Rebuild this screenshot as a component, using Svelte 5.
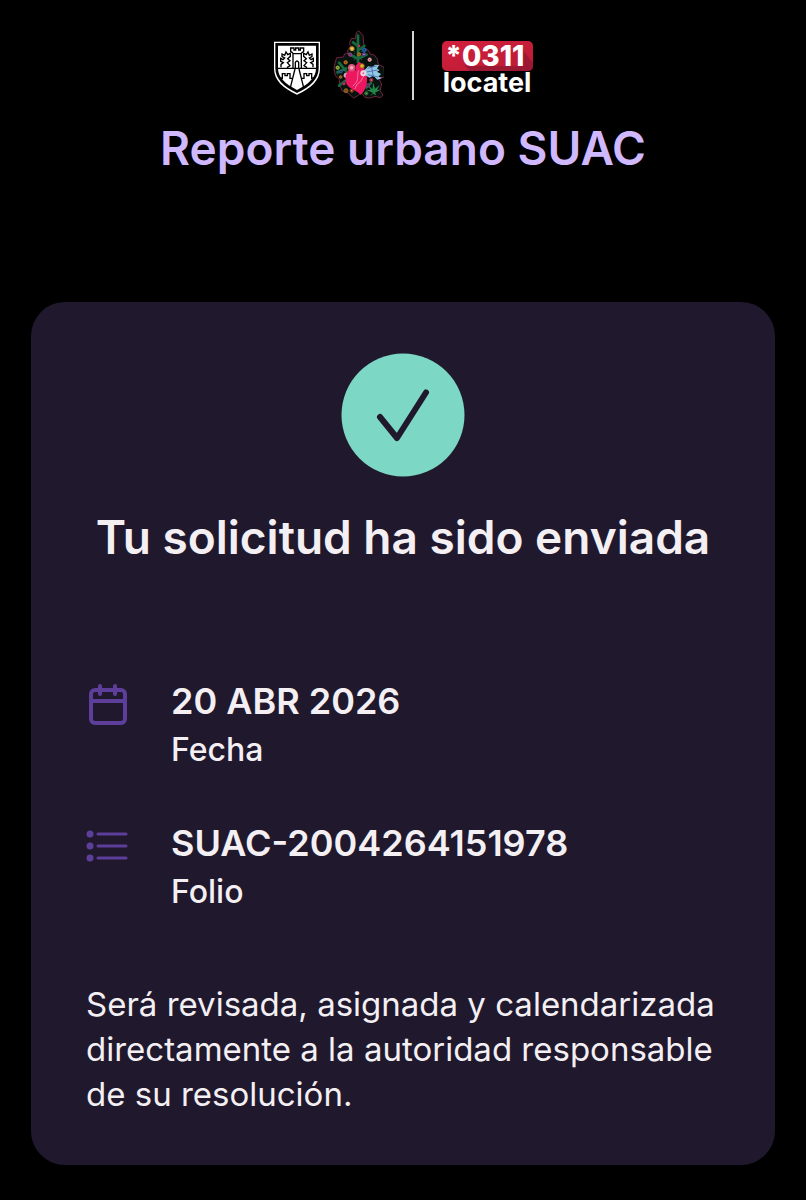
<script>
  const details = [
    { icon: 'calendar', value: '20 ABR 2026', label: 'Fecha' },
    { icon: 'list', value: 'SUAC-2004264151978', label: 'Folio' }
  ];

  // x, y, radius, petal colour, centre colour
  const flowers = [
    [87, 71, 6, '#d8a82c', '#fff2b0'],
    [108, 63, 3, '#a32638', '#e85b6d'],
    [82, 89, 5, '#933b86', '#4a214e'],
    [108, 88, 5, '#a86a24', '#7c4317'],
    [124, 75, 6, '#1e5b9d', '#102f60'],
    [123, 88, 5, '#5a4380', '#c8a1d9'],
    [68, 112, 5, '#b96d1b', '#693111'],
    [44, 128, 5, '#8fae39', '#427624'],
    [54, 140, 4, '#32549c', '#111f46'],
    [53, 156, 4, '#b76a29', '#7c371f'],
    [70, 151, 7, '#cbb0bf', '#77506d'],
    [63, 176, 4, '#8a2450', '#e4678e'],
    [69, 197, 6, '#8c601f', '#4c3916'],
    [86, 197, 5, '#8b3520', '#dca33e'],
    [140, 104, 5, '#f0a0a8', '#c83742'],
    [145, 165, 5, '#8f2a49', '#f07999'],
    [135, 181, 5, '#6d3d79', '#3a1e4b'],
    [130, 205, 5, '#2f6e3d', '#89ae3c']
  ];
</script>

<div class="page">
  <header>
    <div class="brands">
      <svg class="crest" viewBox="27 48 138 162" role="img" aria-label="Ciudad de México">
        <path d="M27 50h138v81c0 34-27 59-69 78-42-19-69-44-69-78Z" fill="#fff" />
        <path d="M31 54h130v76c0 32-25 55-65 74-40-19-65-42-65-74Z" fill="#000" />
        <path d="M39 62h114v68c0 27-20 46-57 65-37-19-57-38-57-65Z" fill="#fff" />
        <g fill="none" stroke="#000" stroke-width="4">
          <path d="M38 130h116M84 130V85l-7-6V69h10v6h5v-6h9v6h5v-6h10v10l-7 6v45M84 86h24M91 130v-18q5-8 10 0v18M90 132l-14 56M102 132l14 56" />
          <path d="M42 158l10 2v-14h8v6h7v-6h8v14h8M109 160h8v-14h8v6h7v-6h8v14l10-2" />
          <path d="M48 127v-9l7-5-8-4v-9l7 4 5-5-8-4v-8l8 4 4-10 5 8 8-4v9l-8 7 7 6-8 6 8 9-9 6" />
          <path d="M144 127v-9l-7-5 8-4v-9l-7 4-5-5 8-4v-8l-8 4-4-10-5 8-8-4v9l8 7-7 6 8 6-8 9 9 6" />
        </g>
      </svg>

      <svg class="heart" viewBox="21 12 162 219" role="img" aria-label="Corazón florido">
        <path d="m107 17-7 6-3 18-12-1-5 13 2 11-8 12 1 9-11 2-2 9-21 2-4 13-4 20 4 21 12 12 1 17 8 17 17 6 17 15 14-8 9-8 12 15 15 1 14-5 16 4 8-7-9-14 5-20-10-18 19-3-2-29-17-9-3-16-9-12-12-2-6-12-13-8-3-36Z" fill="#06120d" stroke="#77213d" stroke-width="3" />
        <g fill="none" stroke="#17663d" stroke-width="8" stroke-linecap="round">
          <path d="M105 112V32M104 63 90 52M107 75l17-12M103 101 78 87M107 101l24-12M70 139 48 113M70 130 43 142M66 168 48 182M130 188l14-14" />
        </g>
        <path d="M105 106V32M94 105V68M115 105V70M50 115l15 23M44 148l23-16" fill="none" stroke="#2b8a52" stroke-width="2" stroke-dasharray="3 3" />
        <path d="m150 203-23-9 16 1-9-16 14 13 3-19 5 18 14-11-8 15 13-2-19 10 4 8-10-5-11 9Z" fill="#24864b" />
        {#each flowers as [x, y, r, petals, centre]}
          <circle cx={x} cy={y} {r} fill={petals} stroke={petals} stroke-width="3" />
          <circle cx={x} cy={y} r="2" fill={centre} />
        {/each}
        <path d="M82 130c-15 12-19 35-10 49 9 14 31 17 40 30 12-8 19-24 20-42 1-15-2-26-7-33l-5-16-12-8-10 13v14Z" fill="#ed1760" />
        <path d="M107 136c-6 16 1 25-9 39l-9 9M123 151l-10 18-10 8-8 15" fill="none" stroke="#f4a1bb" stroke-width="2" />
        <path d="m123 137 12-13 14 2 7-7 12 1-6 11 8 4-8 5 12 7-8 8 12 4-15 5-12-12-12 6-13-8-8-5Z" fill="#90c9e4" />
        <path d="m133 130 28-7M131 141l32-6M135 149l30 7M146 127l5 28" stroke="#5874b9" stroke-width="3" />
        <circle cx="86" cy="128" r="11" fill="#e35a81" />
        <circle cx="86" cy="128" r="7" fill="#f5a7b8" stroke="#c62d60" stroke-width="2" />
        <circle cx="117" cy="123" r="7" fill="#eab52f" stroke="#8e4d1f" stroke-width="3" />
        <circle cx="121" cy="145" r="9" fill="#f2d5df" />
        <circle cx="121" cy="145" r="3" fill="#d46d99" />
      </svg>

      <span class="divider"></span>

      <svg class="locatel" viewBox="0 0 91 54" role="img" aria-label="*0311 locatel">
        <defs>
          <linearGradient id="red" x1="0" y1="0" x2="1" y2="1">
            <stop offset="0" stop-color="#d31f3c" />
            <stop offset="1" stop-color="#b81c36" />
          </linearGradient>
        </defs>
        <rect width="91" height="30" rx="5" fill="url(#red)" />
        <path d="M20 22 28 30h58q5 0 5-5v-3L80 8v17H24Z" fill="#8e1730" opacity=".7" />
        <text class="number" x="43" y="25" text-anchor="middle">*0311</text>
        <text class="name" x="45" y="51" text-anchor="middle">locatel</text>
      </svg>
    </div>
    <h1>Reporte urbano SUAC</h1>
  </header>

  <main>
    <svg class="success" viewBox="0 0 124 124" aria-hidden="true">
      <circle cx="62" cy="62" r="61.500" fill="#7dd7c5" />
      <path d="M39 64 56 85 85 39.500" fill="none" stroke="#20192e" stroke-width="6" stroke-linecap="round" stroke-linejoin="round" />
    </svg>
    <h2>Tu solicitud ha sido enviada</h2>

    <dl>
      {#each details as item}
        <div class="detail">
          <svg class="icon" viewBox="0 0 42 42" aria-hidden="true">
            {#if item.icon === 'calendar'}
              <rect x="5" y="7" width="34" height="33" rx="4" />
              <path d="M5 18h34M14 3v8M29 3v8" />
            {:else}
              <path class="lines" d="M12 9h28M12 21h28M12 33h28" />
              <g class="dots">
                <circle cx="4" cy="9" r="3.500" />
                <circle cx="4" cy="21" r="3.500" />
                <circle cx="4" cy="33" r="3.500" />
              </g>
            {/if}
          </svg>
          <div class="words">
            <dt>{item.label}</dt>
            <dd>{item.value}</dd>
          </div>
        </div>
      {/each}
    </dl>

    <p>Será revisada, asignada y calendarizada directamente a la autoridad responsable de su resolución.</p>
  </main>
</div>

<style>
  :global(body) {
    margin: 0;
    background: #000;
  }
  .page {
    box-sizing: border-box;
    padding: 29px 31px 35px;
    font-family: Inter, "Liberation Sans", sans-serif;
    color: #f4eff3;
  }
  header {
    text-align: center;
  }
  .brands {
    display: flex;
    justify-content: center;
    align-items: center;
    height: 73px;
  }
  svg {
    display: block;
    flex: none;
  }
  .crest {
    width: 46px;
    height: 54px;
    margin-top: 4px;
  }
  .heart {
    width: 54px;
    height: 73px;
    margin-left: 10px;
  }
  .divider {
    width: 2px;
    height: 69px;
    margin: 0 28px;
    background: #d5d5d5;
  }
  .locatel {
    width: 91px;
    height: 54px;
    margin-top: 4px;
    overflow: visible;
  }
  .locatel text {
    fill: #fff;
  }
  .number {
    font-size: 28px;
    font-weight: 800;
  }
  .name {
    font-size: 27px;
    font-weight: 700;
  }
  h1,
  h2 {
    margin: 0;
    font-weight: 600;
    line-height: 56px;
    text-align: center;
  }
  h1 {
    margin-top: 18px;
    font-size: 46px;
    color: #d0b8fe;
  }
  main {
    margin-top: 126px;
    padding: 51px 55px 48px;
    border-radius: 34px;
    background: #20192e;
  }
  .success {
    width: 124px;
    height: 124px;
    margin: 0 auto 32px;
  }
  h2 {
    margin: 0 -20px;
    font-size: 46px;
  }
  dl {
    display: grid;
    gap: 44px;
    margin: 112px 0 65px;
  }
  .detail {
    display: flex;
    gap: 43px;
  }
  .icon {
    width: 42px;
    height: 42px;
    margin-top: 6px;
    fill: none;
    stroke: #5d3e9a;
    stroke-width: 4;
    stroke-linecap: round;
  }
  .lines {
    stroke-width: 3;
  }
  .dots {
    fill: #5d3e9a;
    stroke: none;
  }
  .words {
    display: flex;
    flex-direction: column-reverse;
  }
  dt,
  dd {
    margin: 0;
    line-height: 48px;
  }
  dt {
    font-size: 32px;
    font-weight: 500;
    line-height: 50px;
  }
  dd {
    font-size: 36px;
    font-weight: 600;
  }
  p {
    margin: 0 -12px 0 0;
    font-size: 33px;
    line-height: 45px;
  }
</style>
